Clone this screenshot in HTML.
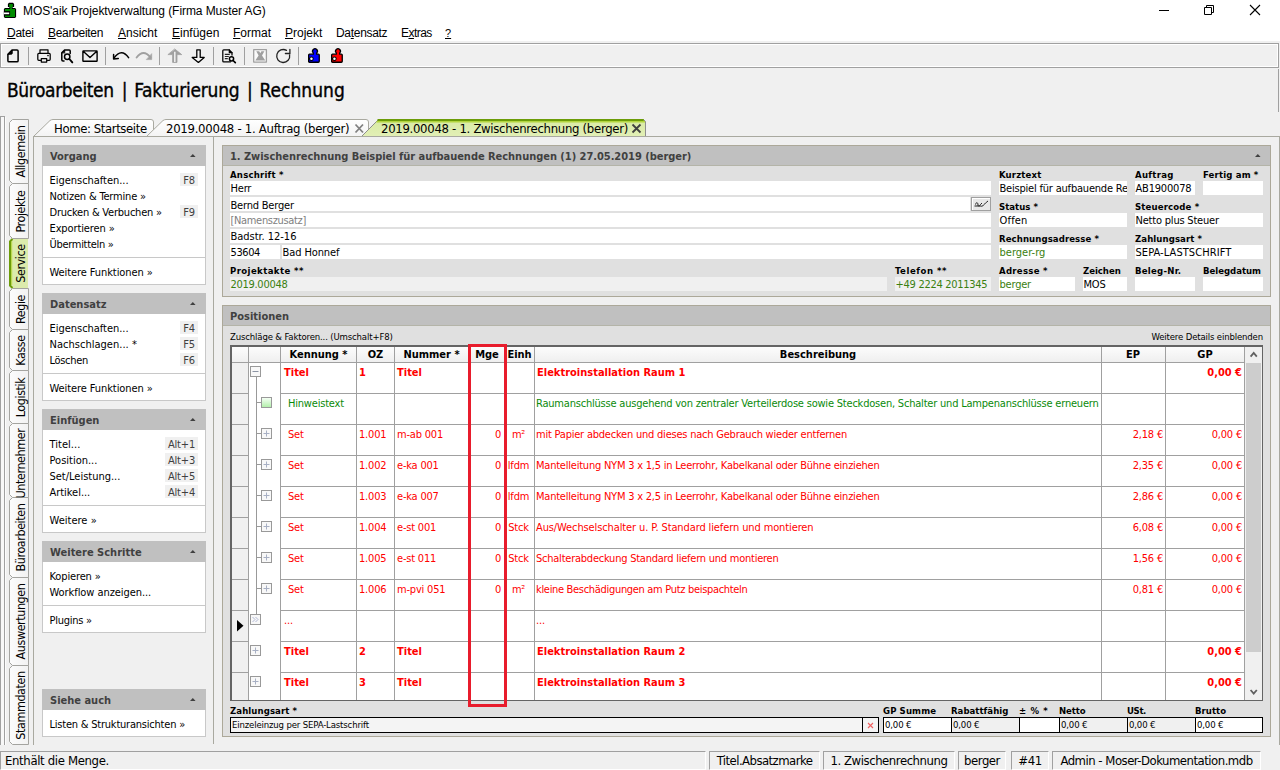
<!DOCTYPE html>
<html lang="de"><head><meta charset="utf-8"><title>MOS'aik Projektverwaltung</title>
<style>
html,body{margin:0;padding:0}
body{width:1280px;height:770px;overflow:hidden;background:#f0f0f0;position:relative;font-family:'DejaVu Sans Condensed','DejaVu Sans','Liberation Sans',sans-serif;font-stretch:condensed;color:#000}
div{position:absolute;box-sizing:border-box}
.t{white-space:nowrap;line-height:0}
.t i{display:inline-block;height:30px;width:0}
.b{font-weight:bold;font-family:'DejaVu Sans Condensed','DejaVu Sans','Liberation Sans',sans-serif}
u{text-decoration:underline;text-underline-offset:1px}
svg{position:absolute;overflow:visible}
.vt{transform:rotate(-90deg);transform-origin:center center;text-align:center}
</style></head>
<body>
<div style="left:0px;top:0px;width:1280px;height:22px;background:#fff"></div>
<svg style="left:0;top:0" width="20" height="22" viewBox="0 0 20 22">
<path d="M9 2.800H13L14.100 3.900V7.100H12.700V7.900H15L16.100 9V17L15 18.100H5L3.900 17V9L5 7.900H9.300V7.100H7.900V3.900z" fill="#000"/>
<path d="M9.200 3.900H12.800V7H11.900V8.900H15V17H5V8.900H10.200V7H9.200z" fill="#008c00"/>
<rect x="3.900" y="11.100" width="6.200" height="4.400" fill="#000"/>
<rect x="3.900" y="12.500" width="5.300" height="1.700" fill="#fff"/>
</svg>
<div class="t" style="top:-15px;left:23px;font-size:12px;letter-spacing:-0.07px;font-family:'Liberation Sans',sans-serif;"><i></i>MOS'aik Projektverwaltung (Firma Muster AG)</div>
<svg style="left:1150px;top:0" width="130" height="22" viewBox="0 0 130 22">
<path d="M9 10.5h10" stroke="#000" stroke-width="1" fill="none"/>
<path d="M54.5 7.5h7v7h-7z M56.5 7.5v-2h7v7h-2" stroke="#000" stroke-width="1" fill="none"/>
<path d="M100 5l10 10M110 5l-10 10" stroke="#000" stroke-width="1.1" fill="none"/>
</svg>
<div style="left:0px;top:22px;width:1280px;height:19px;background:#fff"></div>
<div class="t" style="top:7px;left:7px;font-size:12px;letter-spacing:-0.25px;font-family:'Liberation Sans',sans-serif;"><i></i><u>D</u>atei</div>
<div class="t" style="top:7px;left:48px;font-size:12px;letter-spacing:-0.3px;font-family:'Liberation Sans',sans-serif;"><i></i><u>B</u>earbeiten</div>
<div class="t" style="top:7px;left:118px;font-size:12px;font-family:'Liberation Sans',sans-serif;"><i></i><u>A</u>nsicht</div>
<div class="t" style="top:7px;left:172px;font-size:12px;font-family:'Liberation Sans',sans-serif;"><i></i><u>E</u>infügen</div>
<div class="t" style="top:7px;left:233px;font-size:12px;font-family:'Liberation Sans',sans-serif;"><i></i><u>F</u>ormat</div>
<div class="t" style="top:7px;left:285px;font-size:12px;font-family:'Liberation Sans',sans-serif;"><i></i><u>P</u>rojekt</div>
<div class="t" style="top:7px;left:336px;font-size:12px;letter-spacing:-0.31px;font-family:'Liberation Sans',sans-serif;"><i></i>Da<u>t</u>ensatz</div>
<div class="t" style="top:7px;left:401px;font-size:12px;letter-spacing:-0.55px;font-family:'Liberation Sans',sans-serif;"><i></i>E<u>x</u>tras</div>
<div class="t" style="top:7px;left:445px;font-size:11px;letter-spacing:0px;font-family:'Liberation Sans',sans-serif;"><i></i><u>?</u></div>
<div style="left:0px;top:43px;width:1279px;height:25px;background:#f0f0f0;border:1px solid #a0a0a0;box-shadow:inset 0 0 0 1px #fff"></div>
<div style="left:28px;top:47px;width:1px;height:18px;background:#a0a0a0"></div>
<div style="left:105px;top:47px;width:1px;height:18px;background:#a0a0a0"></div>
<div style="left:159px;top:47px;width:1px;height:18px;background:#a0a0a0"></div>
<div style="left:213px;top:47px;width:1px;height:18px;background:#a0a0a0"></div>
<div style="left:244px;top:47px;width:1px;height:18px;background:#a0a0a0"></div>
<div style="left:298px;top:47px;width:1px;height:18px;background:#a0a0a0"></div>
<svg style="left:0;top:43px" width="360" height="25" viewBox="0 43 360 25" fill="none" stroke="#000" stroke-width="1.500" stroke-linejoin="round" stroke-linecap="round">
<!-- new -->
<path d="M12.300 49.900H17Q18.100 49.900 18.100 51V60.700Q18.100 61.800 17 61.800H9Q7.900 61.800 7.900 60.700V54.300z"/>
<path d="M8.200 54.300L12.300 50.200V53.300Q12.300 54.300 11.300 54.300z" fill="#000" stroke-width="0.800"/>
<!-- print -->
<path d="M40 52.800V49.800H48V52.800" stroke-width="1.250"/>
<path d="M40.600 60.300H38.800Q37.800 60.300 37.800 59.300V54.400Q37.800 53.400 38.800 53.400H49.200Q50.200 53.400 50.200 54.400V59.300Q50.200 60.300 49.200 60.300H47.400" stroke-width="1.250"/>
<path d="M41.300 58.700H46.700V62.100H41.300z" stroke-width="1.250"/>
<circle cx="48" cy="55.600" r="0.800" fill="#000" stroke="none"/>
<!-- preview -->
<path d="M64 61H63Q61.800 61 61.800 59.800V52.800L64.600 49.900H69.200Q70.200 49.900 70.200 50.900V53.500" stroke-width="1.500"/>
<path d="M62 52.800L64.800 50V52.800z" fill="#000" stroke-width="0.600"/>
<circle cx="67.200" cy="56.700" r="2.700" stroke-width="1.500"/>
<path d="M69.400 59L72.300 62.400" stroke-width="1.900"/>
<!-- mail -->
<path d="M83.400 50.900H96.600Q97.100 50.900 97.100 51.400V60.700Q97.100 61.200 96.600 61.200H83.400Q82.900 61.200 82.900 60.700V51.400Q82.900 50.900 83.400 50.900z M83.200 51.300L90 57.600L96.800 51.300" stroke-width="1.400"/>
<!-- undo -->
<path d="M128.600 57.600Q121.500 47.500 114 58" stroke-width="1.500"/>
<path d="M113.600 54.500V58.900L118.300 58.500" stroke-width="1.500"/>
<!-- redo gray -->
<path d="M136.600 57.500Q143.500 48.500 150.500 57.500" stroke="#a0a0a0" stroke-width="1.900"/>
<path d="M151.700 54V59.600H146.600z" fill="#a0a0a0" stroke="#a0a0a0" stroke-width="0.600"/>
<!-- up gray -->
<path d="M175 49.200L181.700 54.600H177V62.400H172.600V54.600H168.300z" fill="#a0a0a0" stroke="#a0a0a0" stroke-width="0.800"/>
<path d="M174.800 51.800V62" stroke="#f0f0f0" stroke-width="1.500" stroke-linecap="butt"/>
<!-- down -->
<path d="M196.800 49.800H200.200V57.400H204.200L198.400 62.400L192.200 57.400H196.800z" stroke-width="1.300" fill="#f4f4f4"/>
<!-- doc search -->
<path d="M229.300 49.900H223.700Q222.800 49.900 222.800 50.800V60.900Q222.800 61.800 223.700 61.800H230.500M232 55V52.600z" stroke-width="1.250"/>
<path d="M229.300 49.900L232 52.600H229.300z" fill="#000" stroke-width="1.200"/>
<path d="M224.800 54.400H229.800M224.800 56.500H228.800M224.800 58.600H227.800" stroke-width="1.200" stroke="#222" stroke-linecap="butt"/>
<circle cx="231.500" cy="58.800" r="2.100" stroke-width="1.500" fill="#f4f4f4"/>
<path d="M233.100 60.500L235.300 62.600" stroke-width="1.700"/>
<!-- x box gray -->
<path d="M253.700 49.700H266.400V62.100H253.700z" stroke="#a0a0a0" fill="#fafafa" stroke-width="1.300"/>
<path d="M256.300 51.300H259.200L260.300 53.200L261.400 51.300H264.400L262 55.600L265.300 60.500H255.300L258.600 55.600z" fill="#a0a0a0" stroke="none"/>
<!-- refresh -->
<path d="M289.600 54.800A6.500 6.500 0 1 1 286.500 50.400" stroke-width="1.300" stroke="#222"/>
<path d="M289.900 49.500V53.500H285.400" stroke-width="1.300" stroke="#222" stroke-linejoin="miter"/>
<g transform="translate(308,0)">
<path d="M5.300 54.150V52.900A2.400 2.400 0 1 1 8.700 52.900V54.150H10.350Q11.250 54.150 11.250 55.050V61.350Q11.250 62.250 10.350 62.250H1.550Q0.650 62.250 0.650 61.350V55.050Q0.650 54.150 1.550 54.150z" fill="#0000ff" stroke="#000" stroke-width="1.300" stroke-linejoin="round"/>
<path d="M0 58.750H2.500" stroke="#000" stroke-width="1.500" stroke-linecap="butt"/>
<circle cx="3.450" cy="58.750" r="2.200" fill="#000" stroke="none"/>
<circle cx="3.450" cy="58.750" r="1.250" fill="#fff" stroke="none"/>
</g><g transform="translate(331,0)">
<path d="M5.300 54.150V52.900A2.400 2.400 0 1 1 8.700 52.900V54.150H10.350Q11.250 54.150 11.250 55.050V61.350Q11.250 62.250 10.350 62.250H1.550Q0.650 62.250 0.650 61.350V55.050Q0.650 54.150 1.550 54.150z" fill="#ff0000" stroke="#000" stroke-width="1.300" stroke-linejoin="round"/>
<path d="M0 58.750H2.500" stroke="#000" stroke-width="1.500" stroke-linecap="butt"/>
<circle cx="3.450" cy="58.750" r="2.200" fill="#000" stroke="none"/>
<circle cx="3.450" cy="58.750" r="1.250" fill="#fff" stroke="none"/>
</g>
</svg>
<div class="t" style="top:67px;left:7px;font-size:19px;-webkit-text-stroke:0.35px #000;"><i></i><span style="letter-spacing:-0.383px">Büroarbeiten</span><span style="letter-spacing:2.67px"> </span>|<span style="letter-spacing:1.17px"> </span><span style="letter-spacing:-0.212px">Fakturierung</span><span style="letter-spacing:2.17px"> </span>|<span style="letter-spacing:1.07px"> </span><span style="letter-spacing:0.045px">Rechnung</span></div>
<div style="left:1278px;top:69px;width:1px;height:43px;background:#a0a0a0"></div>
<div style="left:0px;top:116px;width:5px;height:629px;background:#f8f8f8;border:1px solid #a0a0a0;border-bottom:none"></div>
<div style="left:5px;top:117px;width:1px;height:628px;background:#fcfcfc"></div>
<svg style="left:0;top:0" width="40" height="750" viewBox="0 0 40 750"><defs><linearGradient id="vw" x1="0" y1="0" x2="1" y2="0"><stop offset="0" stop-color="#fcfcfc"/><stop offset="1" stop-color="#f2f2f2"/></linearGradient></defs><path d="M28.500 119.5H12.500L9.500 122.5V180.5L12.500 183.5H28.500z" fill="url(#vw)" stroke="#a4a4a0"/><path d="M28.500 183.5H12.500L9.500 186.5V235.5L12.500 238.5H28.500z" fill="url(#vw)" stroke="#a4a4a0"/><path d="M28.500 288.5H12.500L9.500 291.5V326.5L12.500 329.5H28.500z" fill="url(#vw)" stroke="#a4a4a0"/><path d="M28.500 329.5H12.500L9.500 332.5V367.5L12.500 370.5H28.500z" fill="url(#vw)" stroke="#a4a4a0"/><path d="M28.500 370.5H12.500L9.500 373.5V420.5L12.500 423.5H28.500z" fill="url(#vw)" stroke="#a4a4a0"/><path d="M28.500 423.5H12.500L9.500 426.5V494.5L12.500 497.5H28.500z" fill="url(#vw)" stroke="#a4a4a0"/><path d="M28.500 497.5H12.500L9.500 500.5V574.5L12.500 577.5H28.500z" fill="url(#vw)" stroke="#a4a4a0"/><path d="M28.500 577.5H12.500L9.500 580.5V662.5L12.500 665.5H28.500z" fill="url(#vw)" stroke="#a4a4a0"/><path d="M28.500 665.5H12.500L9.500 668.5V741.5L12.500 744.5H28.500z" fill="url(#vw)" stroke="#a4a4a0"/><path d="M28 239H12L9 242V285L12 288H28z" fill="#dcebac"/><path d="M12.500 239L10 241.5V285.5L12.500 288" fill="none" stroke="#6c9c08" stroke-width="2"/><path d="M11.700 241.5V285" fill="none" stroke="#b2d53e" stroke-width="1"/></svg>
<div class="t vt" style="left:-40.5px;top:145.0px;width:120px;height:13px;line-height:13px;font-size:12.500px;letter-spacing:-0.450px;">Allgemein</div>
<div class="t vt" style="left:-40.5px;top:204.5px;width:120px;height:13px;line-height:13px;font-size:12.500px;letter-spacing:-0.450px;">Projekte</div>
<div class="t vt" style="left:-40.5px;top:257.0px;width:120px;height:13px;line-height:13px;font-size:12.500px;letter-spacing:-0.450px;">Service</div>
<div class="t vt" style="left:-40.5px;top:302.5px;width:120px;height:13px;line-height:13px;font-size:12.500px;letter-spacing:-0.450px;">Regie</div>
<div class="t vt" style="left:-40.5px;top:343.5px;width:120px;height:13px;line-height:13px;font-size:12.500px;letter-spacing:-0.450px;">Kasse</div>
<div class="t vt" style="left:-40.5px;top:390.5px;width:120px;height:13px;line-height:13px;font-size:12.500px;letter-spacing:-0.450px;">Logistik</div>
<div class="t vt" style="left:-40.5px;top:456.5px;width:120px;height:13px;line-height:13px;font-size:12.500px;letter-spacing:-0.450px;clip-path:inset(-4px 0 -4px 26px);">Unternehmer</div>
<div class="t vt" style="left:-40.5px;top:531.0px;width:120px;height:13px;line-height:13px;font-size:12.500px;letter-spacing:-0.450px;">Büroarbeiten</div>
<div class="t vt" style="left:-40.5px;top:615.0px;width:120px;height:13px;line-height:13px;font-size:12.500px;letter-spacing:-0.450px;">Auswertungen</div>
<div class="t vt" style="left:-40.5px;top:698.5px;width:120px;height:13px;line-height:13px;font-size:12.500px;letter-spacing:-0.450px;">Stammdaten</div>
<svg style="left:0;top:0" width="1280" height="140" viewBox="0 0 1280 140">
<defs><linearGradient id="gt" x1="0" y1="0" x2="0" y2="1"><stop offset="0" stop-color="#d9eaa4"/><stop offset="1" stop-color="#e2efb6"/></linearGradient>
<linearGradient id="wt" x1="0" y1="0" x2="0" y2="1"><stop offset="0" stop-color="#ffffff"/><stop offset="1" stop-color="#f3f3f3"/></linearGradient></defs>
<path d="M33.500 136.500L50 120.500q1.500-1 3-1H151q2.500 0 2.500 2.500V136.500z" fill="url(#wt)" stroke="#a9a9a0"/>
<path d="M146.500 136.500L163 120.500q1.500-1 3-1H366q2.500 0 2.500 2.500V136.500z" fill="url(#wt)" stroke="#a9a9a0"/>
<path d="M361.500 136.500L378.500 119.500H643.500L645.500 121.500V136.500z" fill="url(#gt)" stroke="#8e8e8e"/>
<path d="M377.500 120H643.800" stroke="#6c9c08" stroke-width="2"/>
<path d="M376.500 121.700H645" stroke="#b2d53e" stroke-width="1.500"/>
<path d="M355.500 124.500l7.500 8M363 124.500l-7.500 8" stroke="#808080" stroke-width="1.800"/>
<path d="M632.500 124.500l8 8M640.500 124.500l-8 8" stroke="#404040" stroke-width="1.800"/>
</svg>
<div class="t" style="top:103px;left:54px;font-size:13px;letter-spacing:-0.4px;"><i></i>Home: Startseite</div>
<div class="t" style="top:103px;left:166px;font-size:13px;letter-spacing:-0.27px;"><i></i>2019.00048 - 1. Auftrag (berger)</div>
<div class="t" style="top:103px;left:381px;font-size:13px;letter-spacing:-0.3px;"><i></i>2019.00048 - 1. Zwischenrechnung (berger)</div>
<div style="left:33px;top:136px;width:1247px;height:609px;border:1px solid #a9a9a0;border-top:none;border-bottom:none;background:#f0f0f0"></div>
<div style="left:33px;top:136px;width:1247px;height:1px;background:#a9a9a0"></div>
<div style="left:213px;top:137px;width:1px;height:607px;background:#a9a9a0"></div>
<div style="left:42px;top:145px;width:164px;height:21px;background:#c0c0c0"></div>
<div class="t b" style="top:130px;left:50px;font-size:11px;color:#404040;"><i></i>Vorgang</div>
<svg style="left:190px;top:154px" width="6" height="3" viewBox="0 0 6 3"><path d="M0 3L2.800 0L5.600 3z" fill="#404040"/></svg>
<div style="left:42px;top:166px;width:164px;height:119px;background:#fff;border:1px solid #c8c8c8;border-top:none"></div>
<div class="t" style="top:154px;left:49.5px;font-size:11px;letter-spacing:-0.028px;"><i></i>Eigenschaften...</div>
<div style="left:180px;top:173px;width:18px;height:13px;background:#f0f0f0"></div>
<div class="t" style="top:154px;left:39.0px;width:300px;text-align:center;font-size:11px;color:#404040;letter-spacing:-0.2px;"><i></i>F8</div>
<div class="t" style="top:170px;left:49.5px;font-size:11px;letter-spacing:-0.17px;"><i></i>Notizen &amp; Termine »</div>
<div class="t" style="top:186px;left:49.5px;font-size:11px;letter-spacing:-0.224px;"><i></i>Drucken &amp; Verbuchen »</div>
<div style="left:180px;top:205px;width:18px;height:13px;background:#f0f0f0"></div>
<div class="t" style="top:186px;left:39.0px;width:300px;text-align:center;font-size:11px;color:#404040;letter-spacing:-0.2px;"><i></i>F9</div>
<div class="t" style="top:202px;left:49.5px;font-size:11px;letter-spacing:-0.116px;"><i></i>Exportieren »</div>
<div class="t" style="top:218px;left:49.5px;font-size:11px;letter-spacing:-0.296px;"><i></i>Übermitteln »</div>
<div style="left:43px;top:257px;width:162px;height:1px;background:#c8c8c8"></div>
<div class="t" style="top:246px;left:49.5px;font-size:11px;letter-spacing:-0.085px;"><i></i>Weitere Funktionen »</div>
<div style="left:42px;top:293px;width:164px;height:21px;background:#c0c0c0"></div>
<div class="t b" style="top:278px;left:50px;font-size:11px;color:#404040;"><i></i>Datensatz</div>
<svg style="left:190px;top:302px" width="6" height="3" viewBox="0 0 6 3"><path d="M0 3L2.800 0L5.600 3z" fill="#404040"/></svg>
<div style="left:42px;top:314px;width:164px;height:87px;background:#fff;border:1px solid #c8c8c8;border-top:none"></div>
<div class="t" style="top:302px;left:49.5px;font-size:11px;letter-spacing:-0.028px;"><i></i>Eigenschaften...</div>
<div style="left:180px;top:321px;width:18px;height:13px;background:#f0f0f0"></div>
<div class="t" style="top:302px;left:39.0px;width:300px;text-align:center;font-size:11px;color:#404040;letter-spacing:-0.2px;"><i></i>F4</div>
<div class="t" style="top:318px;left:49.5px;font-size:11px;letter-spacing:0.022px;"><i></i>Nachschlagen... *</div>
<div style="left:180px;top:337px;width:18px;height:13px;background:#f0f0f0"></div>
<div class="t" style="top:318px;left:39.0px;width:300px;text-align:center;font-size:11px;color:#404040;letter-spacing:-0.2px;"><i></i>F5</div>
<div class="t" style="top:334px;left:49.5px;font-size:11px;letter-spacing:-0.315px;"><i></i>Löschen</div>
<div style="left:180px;top:353px;width:18px;height:13px;background:#f0f0f0"></div>
<div class="t" style="top:334px;left:39.0px;width:300px;text-align:center;font-size:11px;color:#404040;letter-spacing:-0.2px;"><i></i>F6</div>
<div style="left:43px;top:373px;width:162px;height:1px;background:#c8c8c8"></div>
<div class="t" style="top:362px;left:49.5px;font-size:11px;letter-spacing:-0.085px;"><i></i>Weitere Funktionen »</div>
<div style="left:42px;top:409px;width:164px;height:21px;background:#c0c0c0"></div>
<div class="t b" style="top:394px;left:50px;font-size:11px;color:#404040;"><i></i>Einfügen</div>
<svg style="left:190px;top:418px" width="6" height="3" viewBox="0 0 6 3"><path d="M0 3L2.800 0L5.600 3z" fill="#404040"/></svg>
<div style="left:42px;top:430px;width:164px;height:103px;background:#fff;border:1px solid #c8c8c8;border-top:none"></div>
<div class="t" style="top:418px;left:49.5px;font-size:11px;letter-spacing:0.038px;"><i></i>Titel...</div>
<div style="left:165px;top:437px;width:33px;height:13px;background:#f0f0f0"></div>
<div class="t" style="top:418px;left:31.5px;width:300px;text-align:center;font-size:11px;color:#404040;letter-spacing:-0.2px;"><i></i>Alt+1</div>
<div class="t" style="top:434px;left:49.5px;font-size:11px;letter-spacing:-0.001px;"><i></i>Position...</div>
<div style="left:165px;top:453px;width:33px;height:13px;background:#f0f0f0"></div>
<div class="t" style="top:434px;left:31.5px;width:300px;text-align:center;font-size:11px;color:#404040;letter-spacing:-0.2px;"><i></i>Alt+3</div>
<div class="t" style="top:450px;left:49.5px;font-size:11px;letter-spacing:-0.016px;"><i></i>Set/Leistung...</div>
<div style="left:165px;top:469px;width:33px;height:13px;background:#f0f0f0"></div>
<div class="t" style="top:450px;left:31.5px;width:300px;text-align:center;font-size:11px;color:#404040;letter-spacing:-0.2px;"><i></i>Alt+5</div>
<div class="t" style="top:466px;left:49.5px;font-size:11px;letter-spacing:-0.037px;"><i></i>Artikel...</div>
<div style="left:165px;top:485px;width:33px;height:13px;background:#f0f0f0"></div>
<div class="t" style="top:466px;left:31.5px;width:300px;text-align:center;font-size:11px;color:#404040;letter-spacing:-0.2px;"><i></i>Alt+4</div>
<div style="left:43px;top:505px;width:162px;height:1px;background:#c8c8c8"></div>
<div class="t" style="top:494px;left:49.5px;font-size:11px;letter-spacing:0.015px;"><i></i>Weitere »</div>
<div style="left:42px;top:541px;width:164px;height:21px;background:#c0c0c0"></div>
<div class="t b" style="top:526px;left:50px;font-size:11px;color:#404040;"><i></i>Weitere Schritte</div>
<svg style="left:190px;top:550px" width="6" height="3" viewBox="0 0 6 3"><path d="M0 3L2.800 0L5.600 3z" fill="#404040"/></svg>
<div style="left:42px;top:562px;width:164px;height:71px;background:#fff;border:1px solid #c8c8c8;border-top:none"></div>
<div class="t" style="top:550px;left:49.5px;font-size:11px;letter-spacing:-0.13px;"><i></i>Kopieren »</div>
<div class="t" style="top:566px;left:49.5px;font-size:11px;letter-spacing:-0.063px;"><i></i>Workflow anzeigen...</div>
<div style="left:43px;top:605px;width:162px;height:1px;background:#c8c8c8"></div>
<div class="t" style="top:594px;left:49.5px;font-size:11px;letter-spacing:-0.272px;"><i></i>Plugins »</div>
<div style="left:42px;top:689px;width:164px;height:21px;background:#c0c0c0"></div>
<div class="t b" style="top:674px;left:50px;font-size:11px;color:#404040;"><i></i>Siehe auch</div>
<svg style="left:190px;top:698px" width="6" height="3" viewBox="0 0 6 3"><path d="M0 3L2.800 0L5.600 3z" fill="#404040"/></svg>
<div style="left:42px;top:710px;width:164px;height:27px;background:#fff;border:1px solid #c8c8c8;border-top:none"></div>
<div class="t" style="top:698px;left:49.5px;font-size:11px;letter-spacing:-0.215px;"><i></i>Listen &amp; Strukturansichten »</div>
<div style="left:222px;top:145px;width:1049px;height:152px;border:1px solid #aca899;background:#e0e0e0"></div>
<div style="left:223px;top:146px;width:1047px;height:20px;background:#c0c0c0;border-bottom:1px solid #b4b4a8"></div>
<div class="t b" style="top:130px;left:230px;font-size:11px;color:#404040;letter-spacing:-0.036px;"><i></i>1. Zwischenrechnung Beispiel für aufbauende Rechnungen (1) 27.05.2019 (berger)</div>
<svg style="left:1255px;top:154px" width="6" height="3" viewBox="0 0 6 3"><path d="M0 3L2.800 0L5.600 3z" fill="#404040"/></svg>
<div class="t b" style="top:148px;left:230px;font-size:9.5px;letter-spacing:0.22px;"><i></i>Anschrift *</div>
<div style="left:230px;top:181px;width:761px;height:14px;background:#fff;overflow:hidden"><div class="t" style="left:0.500px;top:-19px;font-size:11px;letter-spacing:-0.2px;"><i></i>Herr</div></div>
<div style="left:230px;top:197px;width:740px;height:14px;background:#fff;overflow:hidden"><div class="t" style="left:0.500px;top:-18px;font-size:11px;letter-spacing:-0.2px;"><i></i>Bernd Berger</div></div>
<div style="left:971px;top:197px;width:20px;height:14px;background:#e8e8e8;border:1px solid #a0a0a0;box-shadow:inset 1px 1px 0 #fff"></div>
<svg style="left:974px;top:200px" width="15" height="9" viewBox="0 0 15 9" fill="none" stroke="#222" stroke-width="1"><path d="M0.500 6h7M1.500 4.500c0.500-2.500 2.500-2.500 2.500 0.500c0 1.500 1.500 1.500 2.500-0.500l1.500-1.500M7.500 6.500c2.500-1 4-4 6.500-5.500"/></svg>
<div style="left:230px;top:213px;width:761px;height:14px;background:#fff;overflow:hidden"><div class="t" style="left:0.500px;top:-19px;font-size:11px;letter-spacing:-0.336px;color:#808080;"><i></i>[Namenszusatz]</div></div>
<div style="left:230px;top:229px;width:761px;height:14px;background:#fff;overflow:hidden"><div class="t" style="left:0.500px;top:-19px;font-size:11px;letter-spacing:-0.028px;"><i></i>Badstr. 12-16</div></div>
<div style="left:230px;top:245px;width:50px;height:14px;background:#fff;overflow:hidden"><div class="t" style="left:0.500px;top:-19px;font-size:11px;letter-spacing:-0.416px;"><i></i>53604</div></div>
<div style="left:282px;top:245px;width:709px;height:14px;background:#fff;overflow:hidden"><div class="t" style="left:0.500px;top:-19px;font-size:11px;letter-spacing:-0.099px;"><i></i>Bad Honnef</div></div>
<div class="t b" style="top:244px;left:230px;font-size:9.5px;letter-spacing:0.405px;"><i></i>Projektakte **</div>
<div style="left:230px;top:277px;width:657px;height:14px;background:#f0f0f0;overflow:hidden"><div class="t" style="left:0.500px;top:-19px;font-size:11px;letter-spacing:-0.29px;color:#3a8010;"><i></i>2019.00048</div></div>
<div class="t b" style="top:244px;left:895px;font-size:9.5px;letter-spacing:0.533px;"><i></i>Telefon **</div>
<div style="left:895px;top:277px;width:96px;height:14px;background:#f0f0f0;overflow:hidden"><div class="t" style="left:0.500px;top:-19px;font-size:11px;letter-spacing:-0.283px;color:#3a8010;"><i></i>+49 2224 2011345</div></div>
<div class="t b" style="top:148px;left:999px;font-size:9.5px;letter-spacing:0.16px;"><i></i>Kurztext</div>
<div style="left:999px;top:181px;width:128px;height:14px;background:#fff;overflow:hidden"><div class="t" style="left:0.500px;top:-19px;font-size:11px;letter-spacing:-0.2px;"><i></i>Beispiel für aufbauende Rechnungen</div></div>
<div class="t b" style="top:148px;left:1135px;font-size:9.5px;letter-spacing:0.307px;"><i></i>Auftrag</div>
<div style="left:1135px;top:181px;width:60px;height:14px;background:#fff;overflow:hidden"><div class="t" style="left:0.500px;top:-19px;font-size:11px;letter-spacing:-0.2px;"><i></i>AB1900078</div></div>
<div class="t b" style="top:148px;left:1203px;font-size:9.5px;letter-spacing:0.165px;"><i></i>Fertig am *</div>
<div style="left:1203px;top:181px;width:60px;height:14px;background:#fff;overflow:hidden"></div>
<div class="t b" style="top:180px;left:999px;font-size:9.5px;letter-spacing:0.036px;"><i></i>Status *</div>
<div style="left:999px;top:213px;width:128px;height:14px;background:#fff;overflow:hidden"><div class="t" style="left:0.500px;top:-19px;font-size:11px;letter-spacing:0.186px;"><i></i>Offen</div></div>
<div class="t b" style="top:180px;left:1135px;font-size:9.5px;letter-spacing:0.151px;"><i></i>Steuercode *</div>
<div style="left:1135px;top:213px;width:128px;height:14px;background:#fff;overflow:hidden"><div class="t" style="left:0.500px;top:-19px;font-size:11px;letter-spacing:-0.2px;"><i></i>Netto plus Steuer</div></div>
<div class="t b" style="top:212px;left:999px;font-size:9.5px;letter-spacing:0.094px;"><i></i>Rechnungsadresse *</div>
<div style="left:999px;top:245px;width:128px;height:14px;background:#fff;overflow:hidden"><div class="t" style="left:0.500px;top:-19px;font-size:11px;letter-spacing:0.02px;color:#3a8010;"><i></i>berger-rg</div></div>
<div class="t b" style="top:212px;left:1135px;font-size:9.5px;letter-spacing:0.087px;"><i></i>Zahlungsart *</div>
<div style="left:1135px;top:245px;width:128px;height:14px;background:#fff;overflow:hidden"><div class="t" style="left:0.500px;top:-19px;font-size:11px;letter-spacing:0.067px;"><i></i>SEPA-LASTSCHRIFT</div></div>
<div class="t b" style="top:244px;left:999px;font-size:9.5px;letter-spacing:0.287px;"><i></i>Adresse *</div>
<div style="left:999px;top:277px;width:76px;height:14px;background:#fff;overflow:hidden"><div class="t" style="left:0.500px;top:-19px;font-size:11px;letter-spacing:-0.2px;color:#3a8010;"><i></i>berger</div></div>
<div class="t b" style="top:244px;left:1083px;font-size:9.5px;letter-spacing:-0.03px;"><i></i>Zeichen</div>
<div style="left:1083px;top:277px;width:44px;height:14px;background:#fff;overflow:hidden"><div class="t" style="left:0.500px;top:-19px;font-size:11px;letter-spacing:-0.2px;"><i></i>MOS</div></div>
<div class="t b" style="top:244px;left:1135px;font-size:9.5px;letter-spacing:0.253px;"><i></i>Beleg-Nr.</div>
<div style="left:1135px;top:277px;width:60px;height:14px;background:#fff;overflow:hidden"></div>
<div class="t b" style="top:244px;left:1203px;font-size:9.5px;letter-spacing:-0.012px;"><i></i>Belegdatum</div>
<div style="left:1203px;top:277px;width:60px;height:14px;background:#fff;overflow:hidden"></div>
<div style="left:222px;top:305px;width:1049px;height:432px;border:1px solid #aca899;background:#e0e0e0"></div>
<div style="left:223px;top:306px;width:1047px;height:20px;background:#c0c0c0;border-bottom:1px solid #b4b4a8"></div>
<div class="t b" style="top:290px;left:230px;font-size:11px;color:#404040;"><i></i>Positionen</div>
<div class="t" style="top:310px;left:230px;font-size:9.5px;letter-spacing:-0.15px;"><i></i>Zuschläge &amp; Faktoren... (Umschalt+F8)</div>
<div class="t" style="top:310px;right:17px;font-size:9.5px;letter-spacing:-0.15px;"><i></i>Weitere Details einblenden</div>
<div style="left:230px;top:345px;width:1033px;height:356px;background:#fff;border:1px solid #646464;border-top-width:2px;border-left-width:2px"></div>
<div style="left:232px;top:347px;width:1012px;height:15px;background:linear-gradient(#fcfcfc,#efefef)"></div>
<div style="left:232px;top:363px;width:16px;height:337px;background:#f0f0f0"></div>
<div style="left:248px;top:347px;width:1px;height:353px;background:#a0a0a0"></div>
<div style="left:280px;top:347px;width:1px;height:353px;background:#a0a0a0"></div>
<div style="left:356px;top:347px;width:1px;height:353px;background:#a0a0a0"></div>
<div style="left:394px;top:347px;width:1px;height:353px;background:#a0a0a0"></div>
<div style="left:468px;top:347px;width:1px;height:353px;background:#a0a0a0"></div>
<div style="left:505px;top:347px;width:1px;height:353px;background:#a0a0a0"></div>
<div style="left:534px;top:347px;width:1px;height:353px;background:#a0a0a0"></div>
<div style="left:1101px;top:347px;width:1px;height:353px;background:#a0a0a0"></div>
<div style="left:1165px;top:347px;width:1px;height:353px;background:#a0a0a0"></div>
<div style="left:1244px;top:347px;width:1px;height:353px;background:#a0a0a0"></div>
<div style="left:232px;top:362px;width:1012px;height:1px;background:#a0a0a0"></div>
<div style="left:232px;top:393px;width:16px;height:1px;background:#a0a0a0"></div>
<div style="left:281px;top:393px;width:963px;height:1px;background:#a0a0a0"></div>
<div style="left:232px;top:424px;width:16px;height:1px;background:#a0a0a0"></div>
<div style="left:281px;top:424px;width:963px;height:1px;background:#a0a0a0"></div>
<div style="left:232px;top:455px;width:16px;height:1px;background:#a0a0a0"></div>
<div style="left:281px;top:455px;width:963px;height:1px;background:#a0a0a0"></div>
<div style="left:232px;top:486px;width:16px;height:1px;background:#a0a0a0"></div>
<div style="left:281px;top:486px;width:963px;height:1px;background:#a0a0a0"></div>
<div style="left:232px;top:517px;width:16px;height:1px;background:#a0a0a0"></div>
<div style="left:281px;top:517px;width:963px;height:1px;background:#a0a0a0"></div>
<div style="left:232px;top:548px;width:16px;height:1px;background:#a0a0a0"></div>
<div style="left:281px;top:548px;width:963px;height:1px;background:#a0a0a0"></div>
<div style="left:232px;top:579px;width:16px;height:1px;background:#a0a0a0"></div>
<div style="left:281px;top:579px;width:963px;height:1px;background:#a0a0a0"></div>
<div style="left:232px;top:610px;width:16px;height:1px;background:#a0a0a0"></div>
<div style="left:281px;top:610px;width:963px;height:1px;background:#a0a0a0"></div>
<div style="left:232px;top:641px;width:16px;height:1px;background:#a0a0a0"></div>
<div style="left:281px;top:641px;width:963px;height:1px;background:#a0a0a0"></div>
<div style="left:232px;top:672px;width:16px;height:1px;background:#a0a0a0"></div>
<div style="left:281px;top:672px;width:963px;height:1px;background:#a0a0a0"></div>
<div class="t b" style="top:328px;left:168.5px;width:300px;text-align:center;font-size:11px;"><i></i>Kennung *</div>
<div class="t b" style="top:328px;left:225.5px;width:300px;text-align:center;font-size:11px;"><i></i>OZ</div>
<div class="t b" style="top:328px;left:281.5px;width:300px;text-align:center;font-size:11px;"><i></i>Nummer *</div>
<div class="t b" style="top:328px;left:337px;width:300px;text-align:center;font-size:11px;"><i></i>Mge</div>
<div class="t b" style="top:328px;left:369.5px;width:300px;text-align:center;font-size:11px;"><i></i>Einh</div>
<div class="t b" style="top:328px;left:668px;width:300px;text-align:center;font-size:11px;"><i></i>Beschreibung</div>
<div class="t b" style="top:328px;left:983px;width:300px;text-align:center;font-size:11px;"><i></i>EP</div>
<div class="t b" style="top:328px;left:1055px;width:300px;text-align:center;font-size:11px;"><i></i>GP</div>
<div style="left:1245px;top:347px;width:17px;height:353px;background:#f0f0f0"></div>
<div style="left:1246px;top:363px;width:15px;height:289px;background:#cdcdcd"></div>
<svg style="left:1250px;top:351px" width="8" height="7" viewBox="0 0 8 7"><path d="M0.600 5.600L3.700 2L6.800 5.600" fill="none" stroke="#606060" stroke-width="1.800"/></svg>
<svg style="left:1250px;top:689px" width="8" height="7" viewBox="0 0 8 7"><path d="M0.600 1L3.700 4.600L6.800 1" fill="none" stroke="#606060" stroke-width="1.800"/></svg>
<div style="left:256px;top:377px;width:1px;height:237px;background:#999"></div>
<svg style="left:250px;top:366px" width="11" height="11" viewBox="0 0 11 11"><rect x="0.500" y="0.500" width="10" height="10" fill="#f8f8f8" stroke="#999"/><path d="M2.500 5.500h6" stroke="#8c94a4"/></svg>
<div class="t b" style="top:346px;left:284px;font-size:11px;color:#ff0000;"><i></i>Titel</div>
<div class="t b" style="top:346px;left:359px;font-size:11px;color:#ff0000;"><i></i>1</div>
<div class="t b" style="top:346px;left:397px;font-size:11px;color:#ff0000;"><i></i>Titel</div>
<div class="t b" style="top:346px;left:537px;font-size:11px;color:#ff0000;"><i></i>Elektroinstallation Raum 1</div>
<div class="t b" style="top:346px;right:38px;font-size:11px;color:#ff0000;"><i></i>0,00 €</div>
<div style="left:257px;top:402px;width:4px;height:1px;background:#999"></div>
<div style="left:261px;top:397px;width:11px;height:11px;background:linear-gradient(#f4fff4,#b4f0ac);border:1px solid #999"></div>
<div class="t" style="top:377px;left:288px;font-size:11px;color:#0a8a0a;letter-spacing:-0.2px;"><i></i>Hinweistext</div>
<div class="t" style="top:377px;left:536px;font-size:11px;color:#0a8a0a;letter-spacing:-0.204px;"><i></i>Raumanschlüsse ausgehend von zentraler Verteilerdose sowie Steckdosen, Schalter und Lampenanschlüsse erneuern</div>
<div style="left:257px;top:433px;width:4px;height:1px;background:#999"></div>
<svg style="left:261px;top:428px" width="11" height="11" viewBox="0 0 11 11"><rect x="0.500" y="0.500" width="10" height="10" fill="#f8f8f8" stroke="#999"/><path d="M2.500 5.500h6M5.500 2.500v6" stroke="#a8b0c4"/></svg>
<div class="t" style="top:408px;left:288px;font-size:11px;color:#ff0000;letter-spacing:-0.2px;"><i></i>Set</div>
<div class="t" style="top:408px;left:359px;font-size:11px;color:#ff0000;letter-spacing:-0.2px;"><i></i>1.001</div>
<div class="t" style="top:408px;left:397px;font-size:11px;color:#ff0000;letter-spacing:-0.2px;"><i></i>m-ab 001</div>
<div class="t" style="top:408px;right:779px;font-size:11px;color:#ff0000;letter-spacing:-0.2px;"><i></i>0</div>
<div class="t" style="top:408px;left:368.5px;width:300px;text-align:center;font-size:11px;color:#ff0000;letter-spacing:-0.2px;"><i></i>m²</div>
<div class="t" style="top:408px;left:536px;font-size:11px;color:#ff0000;letter-spacing:-0.218px;"><i></i>mit Papier abdecken und dieses nach Gebrauch wieder entfernen</div>
<div class="t" style="top:408px;right:117px;font-size:11px;color:#ff0000;letter-spacing:-0.2px;"><i></i>2,18 €</div>
<div class="t" style="top:408px;right:38px;font-size:11px;color:#ff0000;letter-spacing:-0.2px;"><i></i>0,00 €</div>
<div style="left:257px;top:464px;width:4px;height:1px;background:#999"></div>
<svg style="left:261px;top:459px" width="11" height="11" viewBox="0 0 11 11"><rect x="0.500" y="0.500" width="10" height="10" fill="#f8f8f8" stroke="#999"/><path d="M2.500 5.500h6M5.500 2.500v6" stroke="#a8b0c4"/></svg>
<div class="t" style="top:439px;left:288px;font-size:11px;color:#ff0000;letter-spacing:-0.2px;"><i></i>Set</div>
<div class="t" style="top:439px;left:359px;font-size:11px;color:#ff0000;letter-spacing:-0.2px;"><i></i>1.002</div>
<div class="t" style="top:439px;left:397px;font-size:11px;color:#ff0000;letter-spacing:-0.2px;"><i></i>e-ka 001</div>
<div class="t" style="top:439px;right:779px;font-size:11px;color:#ff0000;letter-spacing:-0.2px;"><i></i>0</div>
<div class="t" style="top:439px;left:368.5px;width:300px;text-align:center;font-size:11px;color:#ff0000;letter-spacing:-0.2px;"><i></i>lfdm</div>
<div class="t" style="top:439px;left:536px;font-size:11px;color:#ff0000;letter-spacing:-0.223px;"><i></i>Mantelleitung NYM 3 x 1,5 in Leerrohr, Kabelkanal oder Bühne einziehen</div>
<div class="t" style="top:439px;right:117px;font-size:11px;color:#ff0000;letter-spacing:-0.2px;"><i></i>2,35 €</div>
<div class="t" style="top:439px;right:38px;font-size:11px;color:#ff0000;letter-spacing:-0.2px;"><i></i>0,00 €</div>
<div style="left:257px;top:495px;width:4px;height:1px;background:#999"></div>
<svg style="left:261px;top:490px" width="11" height="11" viewBox="0 0 11 11"><rect x="0.500" y="0.500" width="10" height="10" fill="#f8f8f8" stroke="#999"/><path d="M2.500 5.500h6M5.500 2.500v6" stroke="#a8b0c4"/></svg>
<div class="t" style="top:470px;left:288px;font-size:11px;color:#ff0000;letter-spacing:-0.2px;"><i></i>Set</div>
<div class="t" style="top:470px;left:359px;font-size:11px;color:#ff0000;letter-spacing:-0.2px;"><i></i>1.003</div>
<div class="t" style="top:470px;left:397px;font-size:11px;color:#ff0000;letter-spacing:-0.2px;"><i></i>e-ka 007</div>
<div class="t" style="top:470px;right:779px;font-size:11px;color:#ff0000;letter-spacing:-0.2px;"><i></i>0</div>
<div class="t" style="top:470px;left:368.5px;width:300px;text-align:center;font-size:11px;color:#ff0000;letter-spacing:-0.2px;"><i></i>lfdm</div>
<div class="t" style="top:470px;left:536px;font-size:11px;color:#ff0000;letter-spacing:-0.223px;"><i></i>Mantelleitung NYM 3 x 2,5 in Leerrohr, Kabelkanal oder Bühne einziehen</div>
<div class="t" style="top:470px;right:117px;font-size:11px;color:#ff0000;letter-spacing:-0.2px;"><i></i>2,86 €</div>
<div class="t" style="top:470px;right:38px;font-size:11px;color:#ff0000;letter-spacing:-0.2px;"><i></i>0,00 €</div>
<div style="left:257px;top:526px;width:4px;height:1px;background:#999"></div>
<svg style="left:261px;top:521px" width="11" height="11" viewBox="0 0 11 11"><rect x="0.500" y="0.500" width="10" height="10" fill="#f8f8f8" stroke="#999"/><path d="M2.500 5.500h6M5.500 2.500v6" stroke="#a8b0c4"/></svg>
<div class="t" style="top:501px;left:288px;font-size:11px;color:#ff0000;letter-spacing:-0.2px;"><i></i>Set</div>
<div class="t" style="top:501px;left:359px;font-size:11px;color:#ff0000;letter-spacing:-0.2px;"><i></i>1.004</div>
<div class="t" style="top:501px;left:397px;font-size:11px;color:#ff0000;letter-spacing:-0.2px;"><i></i>e-st 001</div>
<div class="t" style="top:501px;right:779px;font-size:11px;color:#ff0000;letter-spacing:-0.2px;"><i></i>0</div>
<div class="t" style="top:501px;left:368.5px;width:300px;text-align:center;font-size:11px;color:#ff0000;letter-spacing:-0.2px;"><i></i>Stck</div>
<div class="t" style="top:501px;left:536px;font-size:11px;color:#ff0000;letter-spacing:-0.114px;"><i></i>Aus/Wechselschalter u. P. Standard liefern und montieren</div>
<div class="t" style="top:501px;right:117px;font-size:11px;color:#ff0000;letter-spacing:-0.2px;"><i></i>6,08 €</div>
<div class="t" style="top:501px;right:38px;font-size:11px;color:#ff0000;letter-spacing:-0.2px;"><i></i>0,00 €</div>
<div style="left:257px;top:557px;width:4px;height:1px;background:#999"></div>
<svg style="left:261px;top:552px" width="11" height="11" viewBox="0 0 11 11"><rect x="0.500" y="0.500" width="10" height="10" fill="#f8f8f8" stroke="#999"/><path d="M2.500 5.500h6M5.500 2.500v6" stroke="#a8b0c4"/></svg>
<div class="t" style="top:532px;left:288px;font-size:11px;color:#ff0000;letter-spacing:-0.2px;"><i></i>Set</div>
<div class="t" style="top:532px;left:359px;font-size:11px;color:#ff0000;letter-spacing:-0.2px;"><i></i>1.005</div>
<div class="t" style="top:532px;left:397px;font-size:11px;color:#ff0000;letter-spacing:-0.2px;"><i></i>e-st 011</div>
<div class="t" style="top:532px;right:779px;font-size:11px;color:#ff0000;letter-spacing:-0.2px;"><i></i>0</div>
<div class="t" style="top:532px;left:368.5px;width:300px;text-align:center;font-size:11px;color:#ff0000;letter-spacing:-0.2px;"><i></i>Stck</div>
<div class="t" style="top:532px;left:536px;font-size:11px;color:#ff0000;letter-spacing:-0.236px;"><i></i>Schalterabdeckung Standard liefern und montieren</div>
<div class="t" style="top:532px;right:117px;font-size:11px;color:#ff0000;letter-spacing:-0.2px;"><i></i>1,56 €</div>
<div class="t" style="top:532px;right:38px;font-size:11px;color:#ff0000;letter-spacing:-0.2px;"><i></i>0,00 €</div>
<div style="left:257px;top:588px;width:4px;height:1px;background:#999"></div>
<svg style="left:261px;top:583px" width="11" height="11" viewBox="0 0 11 11"><rect x="0.500" y="0.500" width="10" height="10" fill="#f8f8f8" stroke="#999"/><path d="M2.500 5.500h6M5.500 2.500v6" stroke="#a8b0c4"/></svg>
<div class="t" style="top:563px;left:288px;font-size:11px;color:#ff0000;letter-spacing:-0.2px;"><i></i>Set</div>
<div class="t" style="top:563px;left:359px;font-size:11px;color:#ff0000;letter-spacing:-0.2px;"><i></i>1.006</div>
<div class="t" style="top:563px;left:397px;font-size:11px;color:#ff0000;letter-spacing:-0.2px;"><i></i>m-pvi 051</div>
<div class="t" style="top:563px;right:779px;font-size:11px;color:#ff0000;letter-spacing:-0.2px;"><i></i>0</div>
<div class="t" style="top:563px;left:368.5px;width:300px;text-align:center;font-size:11px;color:#ff0000;letter-spacing:-0.2px;"><i></i>m²</div>
<div class="t" style="top:563px;left:536px;font-size:11px;color:#ff0000;letter-spacing:-0.315px;"><i></i>kleine Beschädigungen am Putz beispachteln</div>
<div class="t" style="top:563px;right:117px;font-size:11px;color:#ff0000;letter-spacing:-0.2px;"><i></i>0,81 €</div>
<div class="t" style="top:563px;right:38px;font-size:11px;color:#ff0000;letter-spacing:-0.2px;"><i></i>0,00 €</div>
<svg style="left:250px;top:614px" width="11" height="11" viewBox="0 0 11 11"><rect x="0.500" y="0.500" width="10" height="10" fill="#f8f8f8" stroke="#999"/><path d="M2.500 3l2.500 2.500l-2.500 2.500M5.500 3l2.500 2.500l-2.500 2.500" stroke="#a8b0d0" fill="none" stroke-width="0.900"/></svg>
<div class="t" style="top:594px;left:284px;font-size:11px;color:#ff0000;letter-spacing:-0.2px;"><i></i>...</div>
<div class="t" style="top:594px;left:536px;font-size:11px;color:#ff0000;letter-spacing:-0.2px;"><i></i>...</div>
<svg style="left:237px;top:620px" width="7" height="12" viewBox="0 0 7 12"><path d="M0 0L6.500 5.800L0 11.600z" fill="#000"/></svg>
<svg style="left:250px;top:645px" width="11" height="11" viewBox="0 0 11 11"><rect x="0.500" y="0.500" width="10" height="10" fill="#f8f8f8" stroke="#999"/><path d="M2.500 5.500h6M5.500 2.500v6" stroke="#a8b0c4"/></svg>
<div class="t b" style="top:625px;left:284px;font-size:11px;color:#ff0000;"><i></i>Titel</div>
<div class="t b" style="top:625px;left:359px;font-size:11px;color:#ff0000;"><i></i>2</div>
<div class="t b" style="top:625px;left:397px;font-size:11px;color:#ff0000;"><i></i>Titel</div>
<div class="t b" style="top:625px;left:537px;font-size:11px;color:#ff0000;"><i></i>Elektroinstallation Raum 2</div>
<div class="t b" style="top:625px;right:38px;font-size:11px;color:#ff0000;"><i></i>0,00 €</div>
<svg style="left:250px;top:676px" width="11" height="11" viewBox="0 0 11 11"><rect x="0.500" y="0.500" width="10" height="10" fill="#f8f8f8" stroke="#999"/><path d="M2.500 5.500h6M5.500 2.500v6" stroke="#a8b0c4"/></svg>
<div class="t b" style="top:656px;left:284px;font-size:11px;color:#ff0000;"><i></i>Titel</div>
<div class="t b" style="top:656px;left:359px;font-size:11px;color:#ff0000;"><i></i>3</div>
<div class="t b" style="top:656px;left:397px;font-size:11px;color:#ff0000;"><i></i>Titel</div>
<div class="t b" style="top:656px;left:537px;font-size:11px;color:#ff0000;"><i></i>Elektroinstallation Raum 3</div>
<div class="t b" style="top:656px;right:38px;font-size:11px;color:#ff0000;"><i></i>0,00 €</div>
<div class="t b" style="top:684px;left:230px;font-size:9.5px;letter-spacing:0.087px;"><i></i>Zahlungsart *</div>
<div style="left:230px;top:717px;width:633px;height:16px;background:#f4f4f4;border:1px solid #000"></div>
<div class="t" style="top:698px;left:232px;font-size:9.5px;letter-spacing:-0.15px;"><i></i>Einzeleinzug per SEPA-Lastschrift</div>
<div style="left:862px;top:717px;width:17px;height:16px;background:#f4f4f4;border:1px solid #000"></div>
<svg style="left:867px;top:722px" width="7" height="7" viewBox="0 0 7 7"><path d="M1 1l5 5M6 1l-5 5" stroke="#f06060" stroke-width="1.100"/></svg>
<div class="t b" style="top:684px;left:883px;font-size:9.5px;letter-spacing:0.125px;"><i></i>GP Summe</div>
<div style="left:883px;top:717px;width:69px;height:16px;background:#fff;border:1px solid #000"></div>
<div class="t" style="top:698px;left:885px;font-size:9.5px;letter-spacing:-0.15px;"><i></i>0,00 €</div>
<div class="t b" style="top:684px;left:951px;font-size:9.5px;letter-spacing:0.035px;"><i></i>Rabattfähig</div>
<div style="left:951px;top:717px;width:69px;height:16px;background:#f0f0f0;border:1px solid #000"></div>
<div class="t" style="top:698px;left:953px;font-size:9.5px;letter-spacing:-0.15px;"><i></i>0,00 €</div>
<div class="t b" style="top:684px;left:1019px;font-size:9.5px;letter-spacing:0.672px;"><i></i>± % *</div>
<div style="left:1019px;top:717px;width:41px;height:16px;background:#fff;border:1px solid #000"></div>
<div class="t b" style="top:684px;left:1059px;font-size:9.5px;letter-spacing:-0.079px;"><i></i>Netto</div>
<div style="left:1059px;top:717px;width:69px;height:16px;background:#f0f0f0;border:1px solid #000"></div>
<div class="t" style="top:698px;left:1061px;font-size:9.5px;letter-spacing:-0.15px;"><i></i>0,00 €</div>
<div class="t b" style="top:684px;left:1127px;font-size:9.5px;letter-spacing:-0.357px;"><i></i>USt.</div>
<div style="left:1127px;top:717px;width:69px;height:16px;background:#f0f0f0;border:1px solid #000"></div>
<div class="t" style="top:698px;left:1129px;font-size:9.5px;letter-spacing:-0.15px;"><i></i>0,00 €</div>
<div class="t b" style="top:684px;left:1195px;font-size:9.5px;letter-spacing:0.04px;"><i></i>Brutto</div>
<div style="left:1195px;top:717px;width:68px;height:16px;background:#fff;border:1px solid #000"></div>
<div class="t" style="top:698px;left:1197px;font-size:9.5px;letter-spacing:-0.15px;"><i></i>0,00 €</div>
<div style="left:468px;top:344px;width:39px;height:363px;border:3px solid #e81c2c"></div>
<div style="left:0px;top:749px;width:1280px;height:21px;background:#f0f0f0"></div>
<div style="left:0px;top:751px;width:706px;height:19px;border:1px solid #a0a0a0;border-right-color:#fff;border-bottom-color:#fff;background:#f0f0f0"></div>
<div class="t" style="top:735px;left:5px;font-size:13px;letter-spacing:-0.35px;"><i></i>Enthält die Menge.</div>
<div style="left:709px;top:751px;width:111px;height:19px;border:1px solid #a0a0a0;border-right-color:#fff;border-bottom-color:#fff;background:#f0f0f0"></div>
<div class="t" style="top:735px;left:614.5px;width:300px;text-align:center;font-size:13px;letter-spacing:-0.55px;"><i></i>Titel.Absatzmarke</div>
<div style="left:823px;top:751px;width:132px;height:19px;border:1px solid #a0a0a0;border-right-color:#fff;border-bottom-color:#fff;background:#f0f0f0"></div>
<div class="t" style="top:735px;left:739.0px;width:300px;text-align:center;font-size:13px;letter-spacing:-0.45px;"><i></i>1. Zwischenrechnung</div>
<div style="left:958px;top:751px;width:48px;height:19px;border:1px solid #a0a0a0;border-right-color:#fff;border-bottom-color:#fff;background:#f0f0f0"></div>
<div class="t" style="top:735px;left:832.0px;width:300px;text-align:center;font-size:13px;letter-spacing:-0.45px;"><i></i>berger</div>
<div style="left:1011px;top:751px;width:38px;height:19px;border:1px solid #a0a0a0;border-right-color:#fff;border-bottom-color:#fff;background:#f0f0f0"></div>
<div class="t" style="top:735px;left:880.0px;width:300px;text-align:center;font-size:13px;letter-spacing:-0.45px;"><i></i>#41</div>
<div style="left:1052px;top:751px;width:209px;height:19px;border:1px solid #a0a0a0;border-right-color:#fff;border-bottom-color:#fff;background:#f0f0f0"></div>
<div class="t" style="top:735px;left:1006.5px;width:300px;text-align:center;font-size:13px;letter-spacing:-0.5px;"><i></i>Admin - Moser-Dokumentation.mdb</div>
</body></html>
